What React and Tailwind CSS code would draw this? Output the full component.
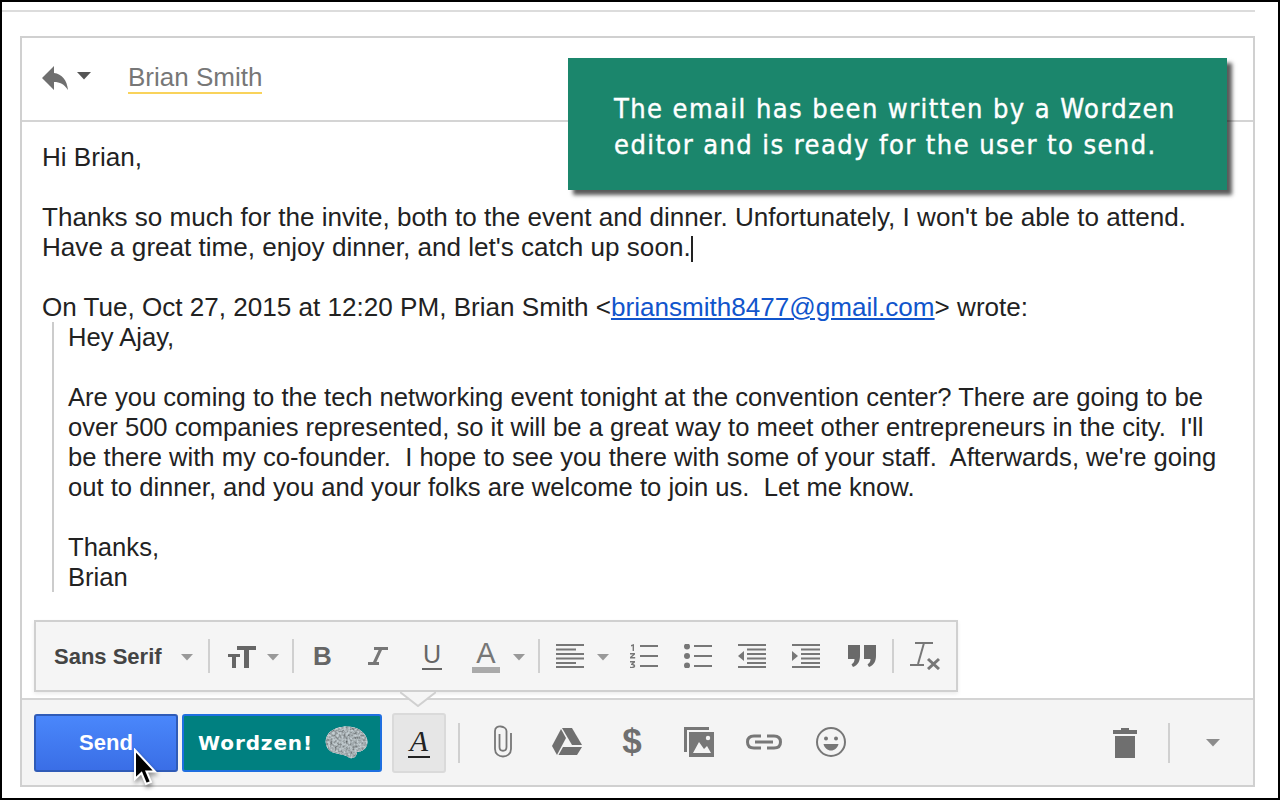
import React from "react";

const Caret = ({ className = "", color = "#8c8c8c", w = 14, h = 8 }) => (
  <svg width={w} height={h} viewBox="0 0 14 8" preserveAspectRatio="none" className={className}>
    <path d="M0 0H14L7 7.5Z" fill={color} />
  </svg>
);

const SmallCaret = ({ className = "" }) => <Caret w={12} h={7} color="#999" className={className} />;

const Sep = ({ className = "" }) => <div className={`w-[2px] bg-[#d0d0d0] ${className}`}></div>;

const ReplyIcon = () => (
  <svg width="26" height="24" viewBox="0 0 26 24">
    <path d="M0 12L12 0V7C20 8 25 14 26 24C22 18 18 16 12 16V24Z" fill="#6f6f6f" />
  </svg>
);

const SizeIcon = () => (
  <svg width="28" height="24" viewBox="0 0 28 24" fill="#666">
    <path d="M9 2H28V6H21V24H16V6H9Z" />
    <path d="M0 10H12V13H8V24H4V13H0Z" />
  </svg>
);

const ItalicIcon = () => (
  <svg width="20" height="18" viewBox="0 0 20 18" fill="none" stroke="#777" strokeWidth="3">
    <path d="M6 1.500H20" />
    <path d="M13 1.500L6 16.500" />
    <path d="M0 16.500H11" />
  </svg>
);

const AlignIcon = () => (
  <svg width="28" height="24" viewBox="0 0 28 24" fill="#777">
    <rect y="0" width="28" height="2" />
    <rect y="4.500" width="20" height="2" />
    <rect y="9" width="28" height="2" />
    <rect y="13.500" width="28" height="2" />
    <rect y="18" width="20" height="2" />
    <rect y="22" width="28" height="2" />
  </svg>
);

const NumListIcon = () => (
  <svg width="28" height="24" viewBox="0 0 28 24" fill="#777">
    <path d="M1 1L4 0V7H2.600V2L1 2.400Z" />
    <path d="M0 9H5V10.600L2 13H5.200V14.600H0V13L3 10.600H0Z" />
    <path d="M0 17H5V18.400L3 20C4.500 20 5.200 20.800 5.200 22C5.200 23.500 4 24.400 0 24V22.800C2 23 3.500 23 3.500 22C3.500 21 2 21 1 21V20L2.600 18.400H0Z" />
    <rect x="10" y="1" width="18" height="2" />
    <rect x="10" y="11" width="18" height="2" />
    <rect x="10" y="21" width="18" height="2" />
  </svg>
);

const BulletIcon = () => (
  <svg width="28" height="24" viewBox="0 0 28 24" fill="#777">
    <circle cx="3" cy="2.500" r="3" />
    <circle cx="3" cy="12" r="3" />
    <circle cx="3" cy="21.500" r="3" />
    <rect x="10" y="1" width="18" height="2" />
    <rect x="10" y="11" width="18" height="2" />
    <rect x="10" y="21" width="18" height="2" />
  </svg>
);

const IndentIcon = ({ more }) => (
  <svg width="28" height="24" viewBox="0 0 28 24" fill="#777">
    <rect y="0" width="28" height="2" />
    <rect x="9" y="4.500" width="19" height="2" />
    <rect x="9" y="9" width="19" height="2" />
    <rect x="9" y="13.500" width="19" height="2" />
    <rect x="9" y="18" width="19" height="2" />
    <rect y="22" width="28" height="2" />
    {more ? <path d="M0 7L6 12L0 17Z" /> : <path d="M6 7L0 12L6 17Z" />}
  </svg>
);

const QuoteIcon = () => (
  <svg width="28" height="22" viewBox="0 0 28 22" fill="#6a6a6a">
    <path d="M0 0H12V11C12 16 10 20 5 22L3.500 19.500C5.500 18 6.500 16.500 6.500 14H0Z" />
    <path d="M16 0H28V11C28 16 26 20 21 22L19.500 19.500C21.500 18 22.500 16.500 22.500 14H16Z" />
  </svg>
);

const ClearIcon = () => (
  <svg width="30" height="28" viewBox="0 0 30 28" fill="none" stroke="#777">
    <path d="M5 1H23" strokeWidth="2" />
    <path d="M14 1L8 22" strokeWidth="2" />
    <path d="M0 23H14" strokeWidth="2" />
    <path d="M18 17L29 27M29 17L18 27" strokeWidth="3" />
  </svg>
);

const ClipIcon = () => (
  <svg width="20" height="33" viewBox="0 0 20 33" fill="none" stroke="#777" strokeWidth="1.800">
    <path d="M6.500 9V22C6.500 27 13.500 27 13.500 22V6C13.500 1 2 -1 2 6V24C2 34 18 34 18 24V8" />
  </svg>
);

const DriveIcon = () => (
  <svg width="30" height="28" viewBox="0 0 30 28" fill="#6f6f6f">
    <path d="M10 0H20L30 17H20Z" />
    <path d="M9 1L14 10L5 27L0 18Z" />
    <path d="M11 19H30L25 27H6.500Z" />
  </svg>
);

const PhotosIcon = () => (
  <svg width="30" height="30" viewBox="0 0 30 30">
    <path d="M0 0H25V3H3V25H0Z" fill="#777" />
    <path d="M5 5H30V30H5Z" fill="#777" />
    <path d="M9 26L15 15L20 22L23 19L27 26Z" fill="#f4f4f4" />
    <circle cx="24" cy="11" r="2.200" fill="#f4f4f4" />
  </svg>
);

const LinkIcon = () => (
  <svg width="36" height="16" viewBox="0 0 36 16" fill="none" stroke="#777" strokeWidth="3">
    <path d="M15 2H8C3 2 1.500 5 1.500 8C1.500 11 3 14 8 14H15" />
    <path d="M21 2H28C33 2 34.500 5 34.500 8C34.500 11 33 14 28 14H21" />
    <path d="M9 8H27" />
  </svg>
);

const SmileIcon = () => (
  <svg width="30" height="30" viewBox="0 0 30 30">
    <circle cx="15" cy="15" r="14" fill="none" stroke="#777" strokeWidth="2" />
    <circle cx="10" cy="11.500" r="2" fill="#777" />
    <circle cx="20" cy="11.500" r="2" fill="#777" />
    <path d="M7.500 17H22.500C21.500 21 18.500 23.500 15 23.500C11.500 23.500 8.500 21 7.500 17Z" fill="#777" />
  </svg>
);

const TrashIcon = () => (
  <svg width="24" height="30" viewBox="0 0 24 30" fill="#6f6f6f">
    <rect x="8" y="0" width="8" height="3" />
    <rect x="0" y="2" width="24" height="4" />
    <rect x="2" y="8" width="20" height="22" />
  </svg>
);

const Cursor = () => (
  <svg width="30" height="40" viewBox="0 0 30 40" className="absolute left-[128px] top-[746px] drop-shadow-[1px_3px_2px_rgba(0,0,0,0.4)]">
    <path d="M5 2V31L11.500 25L16 36L21 34L16.500 23.500H25Z" fill="#000" stroke="#fff" strokeWidth="2" />
  </svg>
);

const Brain = () => (
  <svg width="44" height="34" viewBox="0 0 44 34">
    <defs>
      <filter id="grain" x="0" y="0" width="100%" height="100%">
        <feTurbulence type="fractalNoise" baseFrequency="0.45" numOctaves="2" seed="4" result="n" />
        <feColorMatrix in="n" type="matrix" values="1.400 0 0 0 0 1.400 0 0 0 0 1.400 0 0 0 0 0 0 0 0 1" result="g" />
        <feComposite in="g" in2="SourceAlpha" operator="in" result="c" />
        <feBlend in="c" in2="SourceGraphic" mode="multiply" />
      </filter>
    </defs>
    <g filter="url(#grain)">
      <path d="M2 18C0 9 8 2 18 1C28 -1 40 3 43 13C45 21 39 26 33 26C33 31 28 34 24 31C20 28 16 29 11 27C6 26 3 23 2 18Z" fill="#c4ced2" />
    </g>
  </svg>
);

const quoted = [
  "Hey Ajay,",
  "",
  "Are you coming to the tech networking event tonight at the convention center? There are going to be",
  "over 500 companies represented, so it will be a great way to meet other entrepreneurs in the city.  I'll",
  "be there with my co-founder.  I hope to see you there with some of your staff.  Afterwards, we're going",
  "out to dinner, and you and your folks are welcome to join us.  Let me know.",
  "",
  "Thanks,",
  "Brian",
];

export default function App() {
  return (
    <div className="relative w-[1280px] h-[800px] bg-white border-2 border-black font-['Liberation_Sans',Arial,sans-serif] flex flex-col overflow-hidden">
      <div className="h-[2px] bg-[#dcdcdc] mt-[8px] mr-[23px]"></div>

      <div className="flex flex-col flex-1 mt-[24px] ml-[18px] mr-[23px] mb-[11px] border-2 border-[#d0d0d0]">
        {/* recipient row */}
        <div className="h-[84px] shrink-0 border-b-2 border-[#d4d4d4] flex items-center pl-[20px] pb-[2px]">
          <ReplyIcon />
          <Caret className="ml-[9px] mb-[4px]" color="#555" />
          <div className="ml-[37px] text-[26px] leading-[30px] text-[#777] border-b-2 border-[#f9d35b]">Brian Smith</div>
        </div>

        {/* message */}
        <div className="flex-1 pt-[20px] pl-[20px] text-[26.09px] leading-[30px] text-[#222] whitespace-pre">
          <div>Hi Brian,</div>
          <div className="h-[30px]"></div>
          <div>Thanks so much for the invite, both to the event and dinner. Unfortunately, I won't be able to attend.</div>
          <div>
            Have a great time, enjoy dinner, and let's catch up soon.
            <span className="inline-block w-[2px] h-[26px] bg-[#222] align-[-6px]"></span>
          </div>
          <div className="h-[30px]"></div>
          <div>
            On Tue, Oct 27, 2015 at 12:20 PM, Brian Smith &lt;
            <span className="text-[#1155cc] underline">briansmith8477@gmail.com</span>
            &gt; wrote:
          </div>
          <div className="ml-[10px] border-l-2 border-[#ccc] pl-[14px] text-[25.6px]">
            {quoted.map((l, i) => (
              <div key={i} className="h-[30px]">{l}</div>
            ))}
          </div>
        </div>

        {/* format bar */}
        <div className="ml-[12px] w-[924px] h-[72px] shrink-0 border-2 border-[#d0d0d0] bg-[#f5f5f5] flex items-center shadow-[0_2px_4px_rgba(0,0,0,0.08)]">
          <span className="ml-[18px] w-[109px] text-[22px] font-bold text-[#444]">Sans Serif</span>
          <SmallCaret className="ml-[18px] mt-[2px]" />
          <Sep className="ml-[15px] h-[34px]" />
          <div className="ml-[18px]"><SizeIcon /></div>
          <SmallCaret className="ml-[11px] mt-[2px]" />
          <Sep className="ml-[13px] h-[34px]" />
          <span className="ml-[19px] w-[20px] text-[26px] leading-none font-bold text-[#666]">B</span>
          <div className="ml-[35px] w-[20px]"><ItalicIcon /></div>
          <div className="ml-[34px] w-[20px] flex flex-col items-center">
            <span className="text-[25px] leading-[22px] text-[#666]">U</span>
            <div className="w-[20px] h-[2px] mt-[3px] bg-[#666]"></div>
          </div>
          <div className="ml-[30px] w-[28px] flex flex-col items-center">
            <span className="text-[29px] leading-[26px] text-[#777]">A</span>
            <div className="w-[28px] h-[6px] mt-[1px] bg-[#aaa]"></div>
          </div>
          <SmallCaret className="ml-[13px] mt-[2px]" />
          <Sep className="ml-[13px] h-[34px]" />
          <div className="ml-[16px]"><AlignIcon /></div>
          <SmallCaret className="ml-[13px] mt-[2px]" />
          <div className="ml-[21px]"><NumListIcon /></div>
          <div className="ml-[26px]"><BulletIcon /></div>
          <div className="ml-[26px]"><IndentIcon /></div>
          <div className="ml-[26px]"><IndentIcon more /></div>
          <div className="ml-[28px]"><QuoteIcon /></div>
          <Sep className="ml-[16px] h-[34px]" />
          <div className="ml-[16px]"><ClearIcon /></div>
        </div>

        {/* action bar */}
        <div className="mt-[6px] h-[87px] shrink-0 border-t-2 border-[#d4d4d4] bg-[#f4f4f4] flex items-center pl-[12px]">
          <div className="w-[144px] h-[58px] rounded-[3px] border-2 border-[#2f5bb7] bg-gradient-to-b from-[#4a87fb] to-[#3a6ee6] flex items-center justify-center text-white font-bold text-[22px] mt-[1px] pb-[2px]">
            Send
          </div>
          <div className="ml-[4px] w-[200px] h-[58px] rounded-[3px] border-2 border-[#1f6fe0] bg-[#008080] flex items-center pl-[14px] text-white mt-[1px]">
            <span className="font-['DejaVu_Sans',sans-serif] font-bold text-[20px] tracking-[0.9px] w-[126px]">Wordzen!</span>
            <Brain />
          </div>
          <div className="ml-[10px] w-[54px] h-[60px] rounded-[3px] border-2 border-[#dadada] bg-[#e6e6e6] flex flex-col items-center justify-center">
            <span className="font-['Liberation_Serif',serif] italic text-[30px] leading-[28px] text-[#222]">A</span>
            <div className="w-[22px] h-[2px] mt-[1px] bg-[#222]"></div>
          </div>
          <Sep className="ml-[12px] h-[40px]" />
          <div className="ml-[33px] mb-[2px]"><ClipIcon /></div>
          <div className="ml-[39px] mb-[2px]"><DriveIcon /></div>
          <span className="ml-[40px] w-[20px] text-center text-[35px] leading-none font-bold text-[#6f6f6f] mb-[4px]">$</span>
          <div className="ml-[42px] mb-[2px]"><PhotosIcon /></div>
          <div className="ml-[32px] mb-[2px]"><LinkIcon /></div>
          <div className="ml-[34px] mb-[2px]"><SmileIcon /></div>
          <div className="ml-[267px]"><TrashIcon /></div>
          <Sep className="ml-[31px] h-[40px]" />
          <Caret className="ml-[36px]" />
        </div>
      </div>

      {/* format bar pointer */}
      <svg width="36" height="16" viewBox="0 0 36 16" className="absolute left-[398px] top-[689px]">
        <path d="M0 1L18 15L36 1" fill="#f5f5f5" stroke="#d0d0d0" strokeWidth="2" />
      </svg>

      {/* callout */}
      <div className="absolute left-[566px] top-[56px] w-[659px] h-[132px] bg-[#1b866c] shadow-[5px_5px_4px_rgba(0,0,0,0.65)] pl-[46px] pt-[33px] text-white font-['DejaVu_Sans_Condensed','DejaVu_Sans',sans-serif] text-[27px] leading-[36px] tracking-[1.43px] [-webkit-text-stroke:0.4px_white] whitespace-pre">
        <div>The email has been written by a Wordzen</div>
        <div>editor and is ready for the user to send.</div>
      </div>

      <Cursor />
    </div>
  );
}
